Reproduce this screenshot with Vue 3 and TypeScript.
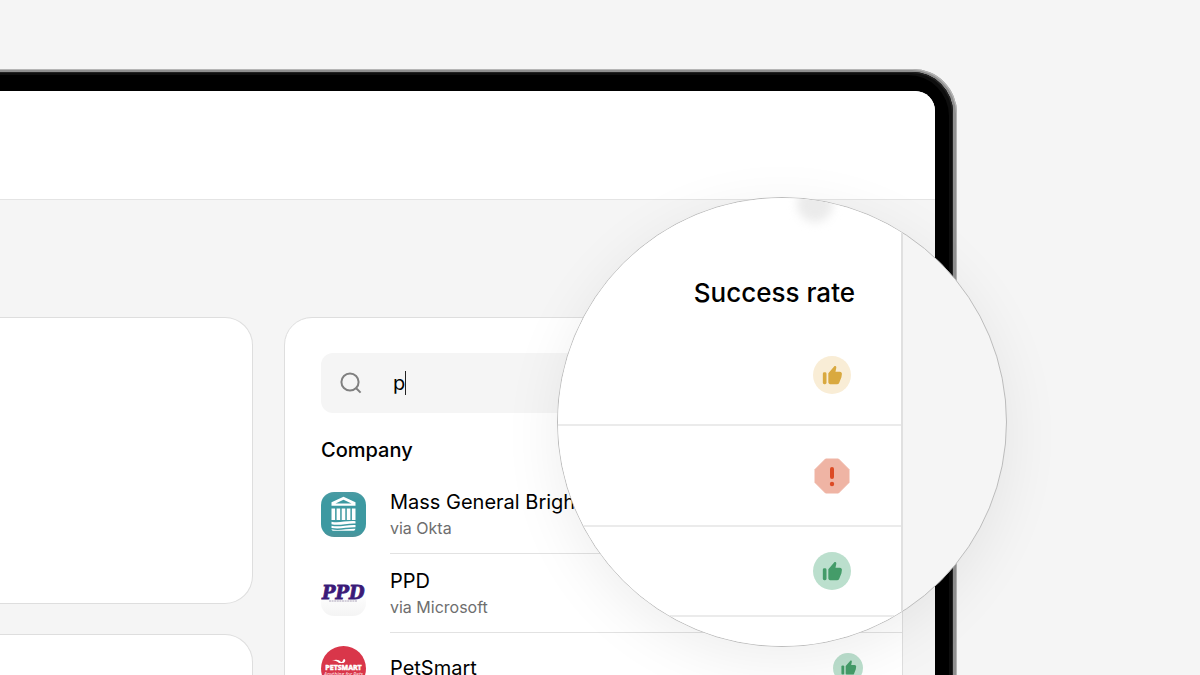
<script setup lang="ts">
import { ref } from 'vue'

type Rate = 'fair' | 'poor' | 'good'

interface Company {
  id: string
  name: string
  via?: string
  rate?: Rate
}

const query = ref('p')

const companies: Company[] = [
  { id: 'mgb', name: 'Mass General Brigham', via: 'via Okta' },
  { id: 'ppd', name: 'PPD', via: 'via Microsoft' },
  { id: 'petsmart', name: 'PetSmart', rate: 'good' },
]

const lensRates: Rate[] = ['fair', 'poor', 'good']
</script>

<template>
  <main class="stage">
    <div class="device">
      <div class="bezel">
        <div class="screen">
          <header class="topbar"></header>
          <div class="content">
            <div class="side">
              <section class="card side-card"></section>
              <section class="card side-card"></section>
            </div>
            <section class="card panel">
              <label class="search">
                <svg class="search-icon" viewBox="0 0 24 24" aria-hidden="true">
                  <circle cx="11" cy="11" r="8.6" />
                  <path d="M17.2 17.2 L21.6 21.6" />
                </svg>
                <input v-model="query" class="search-input" type="text" aria-label="Search company" />
                <span class="caret"></span>
              </label>
              <h2 class="list-title">Company</h2>
              <ul class="list">
                <li v-for="c in companies" :key="c.id" class="row">
                  <svg v-if="c.id === 'mgb'" class="logo" viewBox="0 0 45 45" aria-hidden="true">
                    <defs>
                      <linearGradient id="teal" x1="0" y1="0" x2="0" y2="1">
                        <stop offset="0" stop-color="#4b9ba3" />
                        <stop offset="0.2" stop-color="#3d99a1" />
                        <stop offset="0.85" stop-color="#3d99a1" />
                        <stop offset="1" stop-color="#4e9299" />
                      </linearGradient>
                    </defs>
                    <rect width="45" height="45" rx="13" fill="url(#teal)" />
                    <g fill="#fff">
                      <path d="M10.500 10.300 L22.500 4.800 L34.500 10.300 V13.800 H10.500 Z" />
                      <path d="M14.500 11.500 L22.500 7.800 L30.500 11.500 Z" fill="#3d99a1" />
                      <rect x="10.500" y="16.500" width="3.600" height="11.500" />
                      <rect x="15.600" y="16.500" width="3.600" height="11.500" />
                      <rect x="20.700" y="16.500" width="3.600" height="11.500" />
                      <rect x="25.800" y="16.500" width="3.600" height="11.500" />
                      <rect x="30.900" y="16.500" width="3.600" height="11.500" />
                      <path d="M10.500 29.800 C18 31.500 25 28.500 34.500 29.200 V31.500 C26 31 18 34 10.500 32.200 Z" />
                      <path d="M10.500 33.800 C18 35.500 26 32.500 34.500 33 V35.300 C26 35 19 37.500 10.500 36 Z" />
                      <path d="M10.500 37.300 C18 39 26 36.500 34.500 36.800 C34 38.500 33 38.800 32 38.800 H13 C11.500 38.800 10.800 38.300 10.500 37.300 Z" />
                    </g>
                  </svg>
                  <svg v-else-if="c.id === 'ppd'" class="logo" viewBox="0 0 45 45" aria-hidden="true">
                    <defs>
                      <linearGradient id="tile" x1="0" y1="0" x2="0" y2="1">
                        <stop offset="0.5" stop-color="#fff" />
                        <stop offset="0.7" stop-color="#fafafa" />
                        <stop offset="1" stop-color="#f4f4f4" />
                      </linearGradient>
                    </defs>
                    <rect width="45" height="45" rx="13" fill="url(#tile)" />
                    <text x="1" y="28" class="ppd-text">PPD</text>
                    <path d="M8 30 H36" stroke="#9a90ab" stroke-width="0.800" stroke-dasharray="2 0.600" />
                  </svg>
                  <svg v-else class="logo" viewBox="0 0 45 45" aria-hidden="true">
                    <circle cx="22.500" cy="22.500" r="22.500" fill="#d9364a" />
                    <path d="M11 14.500 C15 13 18 13.500 20 16 C22 16.500 21.500 14 23 13 C25 13.500 24.500 16 22.500 17 L18 17 C16 14.800 14 14.500 11 14.500 Z" fill="#fff" />
                    <text x="22.500" y="23.500" class="pet-name">PETSMART</text>
                    <text x="22.500" y="30" class="pet-tag">Anything for Pets</text>
                  </svg>
                  <div class="row-body">
                    <div>
                      <div class="name">{{ c.name }}</div>
                      <div v-if="c.via" class="via">{{ c.via }}</div>
                    </div>
                    <span v-if="c.rate" class="badge small" :class="c.rate">
                      <svg viewBox="0 0 24 24" aria-hidden="true">
                        <rect x="2" y="9" width="4" height="13" rx="1.600" />
                        <path d="M8 10 L14.300 2.700 C15.300 1.700 17 2.600 16.700 4 L15.800 8.500 H20.500 C22 8.500 23 9.600 22.800 11 L22.300 14.500 L20 20.300 C19.600 21.400 19 22 17.700 22 H10 C8.800 22 8 21.200 8 20 Z" />
                      </svg>
                    </span>
                  </div>
                </li>
              </ul>
            </section>
          </div>
        </div>
      </div>
      <aside class="lens">
        <div class="lens-pane">
          <span class="smudge"></span>
          <h2 class="lens-title">Success rate</h2>
          <div v-for="r in lensRates" :key="r" class="lens-row" :class="'row-' + r">
            <span class="badge" :class="r">
              <svg v-if="r === 'poor'" class="octagon" viewBox="0 0 38 38" aria-hidden="true">
                <path d="M12.500 2 H25.500 L36 12.500 V25.500 L25.500 36 H12.500 L2 25.500 V12.500 Z" fill="#efb4a4" stroke="#efb4a4" stroke-width="1" stroke-linejoin="round" />
                <path d="M19 12 V20" stroke="#dc4a24" stroke-width="4" stroke-linecap="round" />
                <circle cx="19" cy="27" r="2.200" fill="#dc4a24" />
              </svg>
              <svg v-else viewBox="0 0 24 24" aria-hidden="true">
                <rect x="2" y="9" width="4" height="13" rx="1.600" />
                <path d="M8 10 L14.300 2.700 C15.300 1.700 17 2.600 16.700 4 L15.800 8.500 H20.500 C22 8.500 23 9.600 22.800 11 L22.300 14.500 L20 20.300 C19.600 21.400 19 22 17.700 22 H10 C8.800 22 8 21.200 8 20 Z" />
              </svg>
            </span>
          </div>
        </div>
      </aside>
    </div>
  </main>
</template>

<style>
body {
  margin: 0;
  background: #f5f5f5;
}
</style>

<style scoped>
.stage {
  box-sizing: border-box;
  height: 100vh;
  padding: 69px 243px 0 0;
  overflow: hidden;
  background: #f5f5f5;
  color: #000;
  font-family: Inter, 'Liberation Sans', sans-serif;
}

.device {
  position: relative;
  height: 100%;
  box-sizing: border-box;
  padding: 3px 4px 0 0;
  border-radius: 0 44px 0 0;
  background: #8f8f8f;
  box-shadow: inset -1px 1px 0 #b5b5b5;
}

.bezel {
  box-sizing: border-box;
  height: 100%;
  padding: 19px 18px 0 0;
  border-radius: 0 41px 0 0;
  background: #000;
  box-shadow: inset -1px 1px 0 #222, inset -4px 3px 0 #0e0e0e;
}

.screen {
  height: 100%;
  overflow: hidden;
  border-radius: 0 20px 0 0;
  background: #f5f5f5;
}

.topbar {
  height: 108px;
  border-bottom: 1px solid #e4e4e4;
  background: #fff;
}

.content {
  display: grid;
  grid-template-columns: minmax(0, 1fr) 619px;
  gap: 31px;
  padding: 117px 32px 0 0;
}

.side {
  display: flex;
  flex-direction: column;
  gap: 30px;
}

.card {
  box-sizing: border-box;
  border: 1px solid #dedede;
  border-radius: 28px;
  background: #fff;
}

.side-card {
  height: 287px;
  border-left: 0;
  border-radius: 0 28px 28px 0;
}

.panel {
  padding: 35px 0 40px 36px;
}

.search {
  display: flex;
  align-items: center;
  height: 60px;
  margin-right: 36px;
  padding-left: 18px;
  box-sizing: border-box;
  border-radius: 12px;
  background: #f5f5f5;
}

.search-icon {
  width: 24px;
  height: 24px;
  margin-right: 30px;
  fill: none;
  stroke: #808080;
  stroke-width: 2;
}

.search-input {
  field-sizing: content;
  padding: 0;
  border: 0;
  outline: 0;
  background: transparent;
  color: #000;
  caret-color: transparent;
  font: 400 20px/26px Inter, 'Liberation Sans', sans-serif;
}

.caret {
  width: 1px;
  height: 24px;
  background: #222;
}

.list-title {
  margin: 24px 0 11px;
  font-size: 20px;
  line-height: 27px;
  font-weight: 500;
}

.list {
  margin: 0;
  padding: 0;
  list-style: none;
}

.row {
  display: flex;
  align-items: center;
  height: 79px;
}

.row:last-child {
  height: 70px;
}

.logo {
  flex: none;
  width: 45px;
  height: 45px;
  margin-right: 24px;
}

.row-body {
  flex: 1;
  display: flex;
  align-items: center;
  justify-content: space-between;
  box-sizing: border-box;
  height: 100%;
  padding-right: 39px;
  border-bottom: 1px solid #e2e2e2;
}

.name {
  font-size: 20px;
  line-height: 28px;
}

.via {
  font-size: 16px;
  line-height: 24px;
  color: #6e6e6e;
}

.ppd-text {
  font: italic 700 18px 'DejaVu Serif', serif;
  fill: #3b1a78;
  stroke: #3b1a78;
  stroke-width: 0.8px;
}

.pet-name {
  font: 700 7px 'Open Sans', sans-serif;
  fill: #fff;
  stroke: #fff;
  stroke-width: 0.5px;
  text-anchor: middle;
}

.pet-tag {
  font: italic 600 5px 'Open Sans', sans-serif;
  fill: #fbd9dc;
  text-anchor: middle;
}

.badge {
  display: flex;
  align-items: center;
  justify-content: center;
  width: 38px;
  height: 38px;
  border-radius: 50%;
}

.badge svg {
  width: 22px;
  height: 22px;
}

.badge.small {
  width: 30px;
  height: 30px;
}

.badge.small svg {
  width: 17px;
  height: 17px;
}

.badge .octagon {
  width: 38px;
  height: 38px;
}

.fair {
  background: #f9edd6;
  fill: #d9a940;
}

.good {
  background: #bbdfcd;
  fill: #449c69;
}

.lens {
  position: absolute;
  top: 128px;
  right: -50px;
  box-sizing: border-box;
  width: 450px;
  height: 450px;
  overflow: hidden;
  border: 1px solid #bcbcbc;
  border-radius: 50%;
  background: #f5f5f5;
  box-shadow: 0 14px 60px rgba(0, 0, 0, 0.07);
}

.lens-pane {
  position: relative;
  box-sizing: border-box;
  width: 345px;
  height: 100%;
  border-right: 2px solid #e0e0e0;
  background: #fff;
}

.smudge {
  position: absolute;
  top: -12px;
  right: 68px;
  width: 36px;
  height: 36px;
  border-radius: 50%;
  background: #ebebeb;
  filter: blur(5px);
}

.lens-title {
  margin: 0;
  padding: 78px 46px 15px 0;
  font-size: 26px;
  line-height: 34px;
  font-weight: 500;
  text-align: right;
}

.lens-row {
  display: flex;
  align-items: center;
  justify-content: flex-end;
  box-sizing: border-box;
  height: 101px;
  padding-right: 50px;
  border-bottom: 2px solid #ebebeb;
}

.lens-row .badge:not(.poor) {
  background-clip: padding-box;
}

.row-good {
  height: 90px;
}

.row-good,
.row-fair,
.row-poor {
  background: transparent;
}
</style>
